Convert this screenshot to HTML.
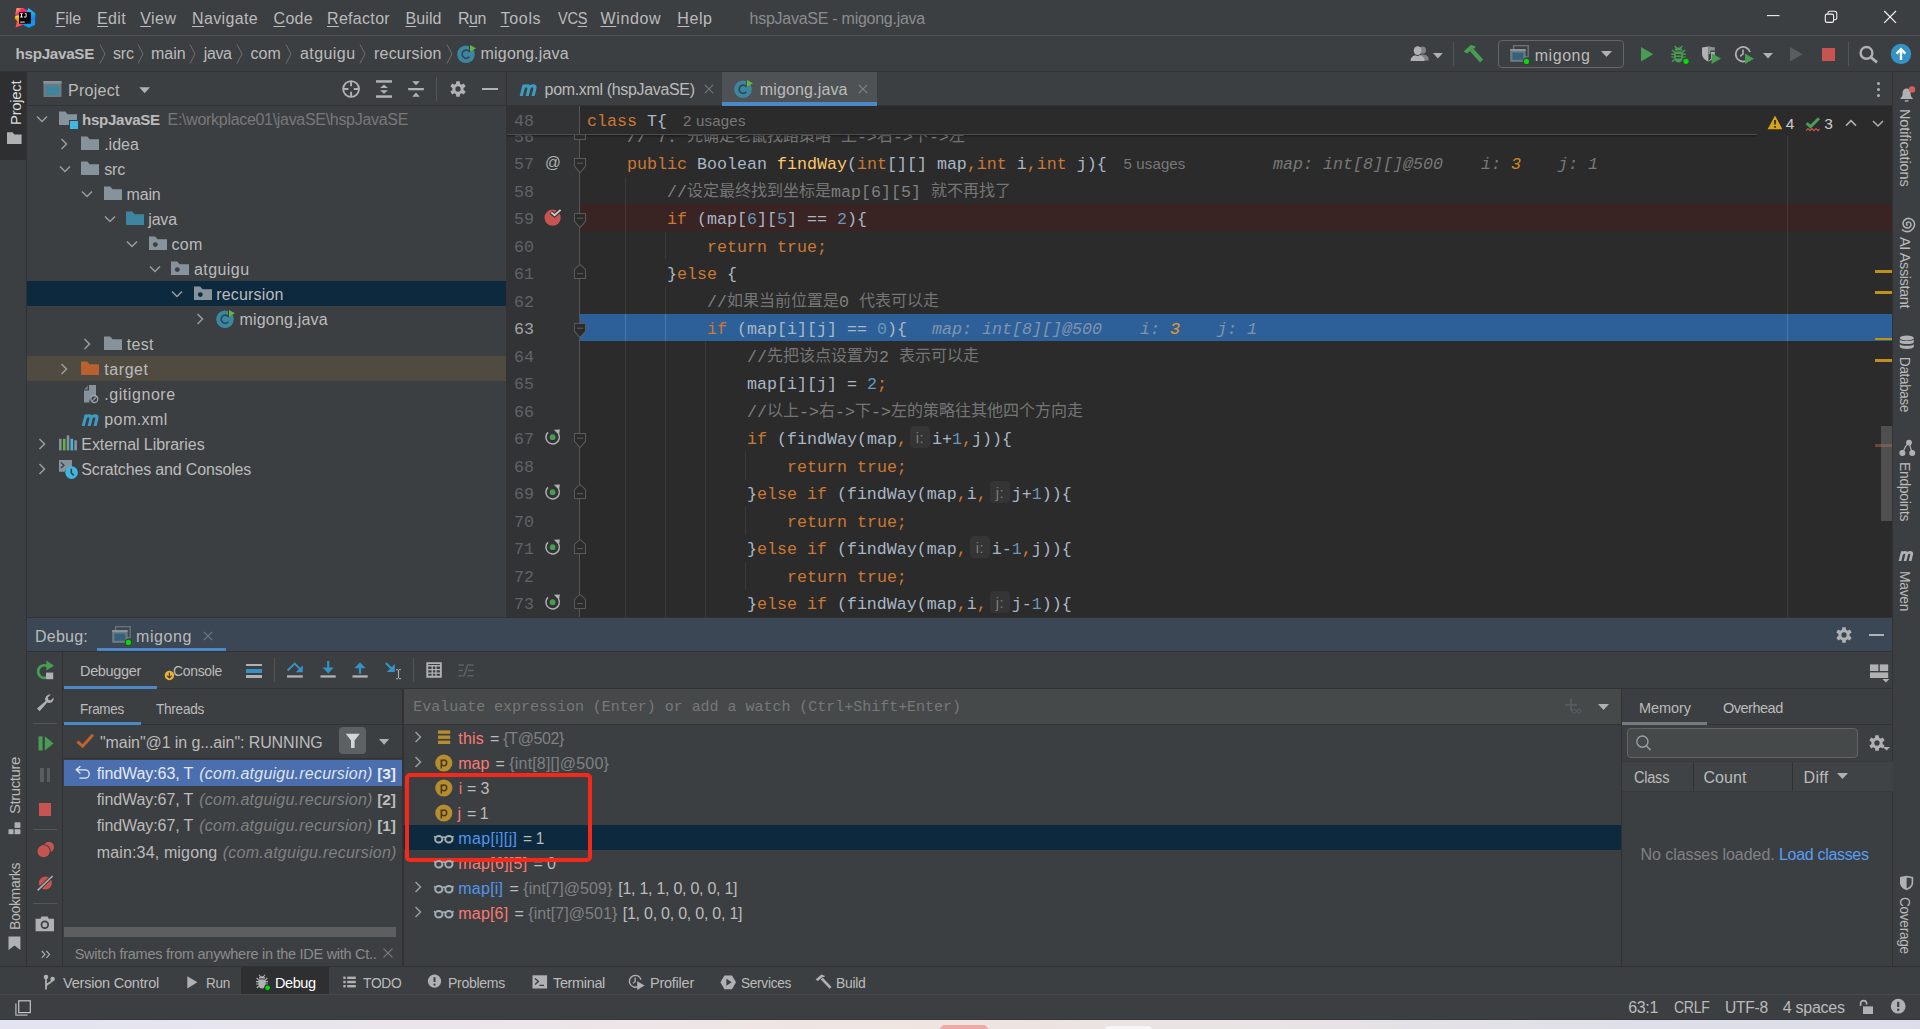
<!DOCTYPE html>
<html lang="en"><head><meta charset="utf-8"><title>hspJavaSE - migong.java</title>
<style>
html,body{margin:0;padding:0;background:#3c3f41;}
body{width:1920px;height:1029px;position:relative;overflow:hidden;font-family:"Liberation Sans","Noto Sans CJK SC",sans-serif;color:#bbbbbb;}
.a{position:absolute;box-sizing:border-box;}
.t{position:absolute;white-space:pre;font-family:"Liberation Sans","Noto Sans CJK SC",sans-serif;}
.m{font-family:"Liberation Mono","Noto Sans CJK SC",monospace;}
.ln{position:absolute;left:587px;height:27.5px;line-height:27.5px;font-family:"Liberation Mono","Noto Sans CJK SC",monospace;font-size:16.6667px;white-space:pre;color:#a9b7c6;}
.ln .c{font-size:16px;opacity:.88;position:relative;top:-0.8px}
.k{color:#cc7832} .n{color:#6897bb} .cm{color:#808080} .f{color:#ffc66d}
.h{color:#787878;font-style:italic} .ho{color:#cb8a1d;font-style:italic}
.u{text-decoration:underline;text-underline-offset:2px;}
.hb{color:#8194ae;font-style:italic} .hb .ho{color:#e39a2d}
.ph{display:inline-block;box-sizing:border-box;width:20px;height:22px;line-height:25px;overflow:hidden;margin:0 2px 0 3px;background:#353535;border-radius:4px;color:#7c7c7c;font-family:"Liberation Sans","Noto Sans CJK SC",sans-serif;font-size:14.5px;letter-spacing:.4px;text-align:center;vertical-align:middle;position:relative;top:-2.5px}
</style></head>
<body>
<div class="a" style="left:0px;top:1019px;width:1920px;height:10px;background:linear-gradient(90deg,#e3e4f1 0%,#ebe5ea 25%,#efe4e0 48%,#e8e3e4 65%,#dfdfe9 85%,#dcdde8 100%);"></div>
<div class="a" style="left:940px;top:1025px;width:48px;height:6px;background:#eeaaa4;border-radius:5px 5px 0 0;"></div>
<div class="a" style="left:1105px;top:1026px;width:47px;height:5px;background:#f6f4f6;border-radius:4px 4px 0 0;"></div>
<div class="a" style="left:0px;top:0px;width:1920px;height:35px;background:#3c3f41;"></div>
<div class="a" style="left:0px;top:35px;width:1920px;height:1px;background:#515151;"></div>
<div class="a" style="left:0px;top:36px;width:1920px;height:35px;background:#3c3f41;"></div>
<div class="a" style="left:0px;top:71px;width:1920px;height:1px;background:#323232;"></div>
<div class="a" style="left:0px;top:72px;width:26px;height:923px;background:#3c3f41;"></div>
<div class="a" style="left:26px;top:72px;width:1px;height:923px;background:#323232;"></div>
<div class="a" style="left:0px;top:72px;width:26px;height:88px;background:#2d2f30;"></div>
<div class="a" style="left:1892px;top:72px;width:1px;height:923px;background:#323232;"></div>
<div class="a" style="left:1893px;top:72px;width:27px;height:923px;background:#3c3f41;"></div>
<div class="a" style="left:27px;top:72px;width:479px;height:546px;background:#3c3f41;"></div>
<div class="a" style="left:27px;top:105px;width:479px;height:1px;background:#323232;"></div>
<div class="a" style="left:506px;top:72px;width:1px;height:546px;background:#323232;"></div>
<div class="a" style="left:507px;top:72px;width:1385px;height:34px;background:#3c3f41;"></div>
<div class="a" style="left:722px;top:72px;width:155px;height:34px;background:#4e5254;"></div>
<div class="a" style="left:722px;top:102px;width:155px;height:4px;background:#4a88c7;"></div>
<div class="a" style="left:507px;top:105px;width:215px;height:1px;background:#323232;"></div>
<div class="a" style="left:877px;top:105px;width:1015px;height:1px;background:#323232;"></div>
<div class="a" style="left:507px;top:106px;width:1385px;height:512px;background:#2b2b2b;"></div>
<div class="a" style="left:507px;top:106px;width:72px;height:512px;background:#313335;"></div>
<div class="a" style="left:579px;top:106px;width:1px;height:512px;background:#555555;"></div>
<div class="a" style="left:580px;top:204px;width:1312px;height:27px;background:#3a2323;"></div>
<div class="a" style="left:580px;top:314px;width:1312px;height:27px;background:#2d6099;"></div>
<div class="a" style="left:625px;top:177px;width:1px;height:441px;background:#3a3a3a;"></div>
<div class="a" style="left:665px;top:232px;width:1px;height:27px;background:#3a3a3a;"></div>
<div class="a" style="left:665px;top:287px;width:1px;height:331px;background:#3a3a3a;"></div>
<div class="a" style="left:705px;top:341px;width:1px;height:277px;background:#3a3a3a;"></div>
<div class="a" style="left:745px;top:452px;width:1px;height:28px;background:#3a3a3a;"></div>
<div class="a" style="left:745px;top:507px;width:1px;height:28px;background:#3a3a3a;"></div>
<div class="a" style="left:745px;top:562px;width:1px;height:28px;background:#3a3a3a;"></div>
<div class="a" style="left:625px;top:204px;width:1px;height:27px;background:#4a3535;"></div>
<div class="a" style="left:625px;top:314px;width:1px;height:27px;background:#4a78ab;"></div>
<div class="a" style="left:665px;top:314px;width:1px;height:27px;background:#4a78ab;"></div>
<div class="a" style="left:1787px;top:135px;width:1px;height:483px;background:#3d3d3d;"></div>
<div class="a" style="left:1787px;top:204px;width:1px;height:27px;background:#4a3535;"></div>
<div class="a" style="left:1787px;top:314px;width:1px;height:27px;background:#4a78ab;"></div>
<div class="ln" style="top:123.5px">    <span class="cm">// 7. <span class="c">先确定老鼠找路策略</span> <span class="c">上</span>-&gt;<span class="c">右</span>-&gt;<span class="c">下</span>-&gt;<span class="c">左</span></span></div>
<div class="ln" style="top:151.0px">    <span class="k">public</span> Boolean <span class="f">findWay</span>(<span class="k">int</span>[][] map<span class="k">,int</span> i<span class="k">,int</span> j){</div>
<div class="ln" style="top:178.5px">        <span class="cm">//<span class="c">设定最终找到坐标是</span>map[6][5] <span class="c">就不再找了</span></span></div>
<div class="ln" style="top:206.0px">        <span class="k">if</span> (map[<span class="n">6</span>][<span class="n">5</span>] == <span class="n">2</span>){</div>
<div class="ln" style="top:233.5px">            <span class="k">return true;</span></div>
<div class="ln" style="top:261.0px">        }<span class="k">else</span> {</div>
<div class="ln" style="top:288.5px">            <span class="cm">//<span class="c">如果当前位置是</span>0 <span class="c">代表可以走</span></span></div>
<div class="ln" style="top:316.0px">            <span class="k">if</span> (map[i][j] == <span class="n">0</span>){</div>
<div class="ln" style="top:343.5px">                <span class="cm">//<span class="c">先把该点设置为</span>2 <span class="c">表示可以走</span></span></div>
<div class="ln" style="top:371.0px">                map[i][j] = <span class="n">2</span><span class="k">;</span></div>
<div class="ln" style="top:398.5px">                <span class="cm">//<span class="c">以上</span>-&gt;<span class="c">右</span>-&gt;<span class="c">下</span>-&gt;<span class="c">左的策略往其他四个方向走</span></span></div>
<div class="ln" style="top:426.0px">                <span class="k">if</span> (findWay(map<span class="k">,</span><span class="ph">i:</span>i+<span class="n">1</span><span class="k">,</span>j)){</div>
<div class="ln" style="top:453.5px">                    <span class="k">return true;</span></div>
<div class="ln" style="top:481.0px">                }<span class="k">else if</span> (findWay(map<span class="k">,</span>i<span class="k">,</span><span class="ph">j:</span>j+<span class="n">1</span>)){</div>
<div class="ln" style="top:508.5px">                    <span class="k">return true;</span></div>
<div class="ln" style="top:536.0px">                }<span class="k">else if</span> (findWay(map<span class="k">,</span><span class="ph">i:</span>i-<span class="n">1</span><span class="k">,</span>j)){</div>
<div class="ln" style="top:563.5px">                    <span class="k">return true;</span></div>
<div class="ln" style="top:591.0px">                }<span class="k">else if</span> (findWay(map<span class="k">,</span>i<span class="k">,</span><span class="ph">j:</span>j-<span class="n">1</span>)){</div>
<div class="ln h" style="left:1273px;top:151.0px">map: int[8][]@500</div>
<div class="ln h" style="left:1481px;top:151.0px">i: <span class="ho">3</span></div>
<div class="ln h" style="left:1558px;top:151.0px">j: 1</div>
<div class="ln hb" style="left:932px;top:316.0px">map: int[8][]@500</div>
<div class="ln hb" style="left:1140px;top:316.0px">i: <span class="ho">3</span></div>
<div class="ln hb" style="left:1217px;top:316.0px">j: 1</div>
<span class="t" style="letter-spacing:0.139px;left:1123.5px;top:154px;font-size:15px;line-height:19px;color:#787878;">5 usages</span>
<div class="ln" style="left:514px;top:123.5px;color:#606366">56</div>
<div class="ln" style="left:514px;top:151.0px;color:#606366">57</div>
<div class="ln" style="left:514px;top:178.5px;color:#606366">58</div>
<div class="ln" style="left:514px;top:206.0px;color:#606366">59</div>
<div class="ln" style="left:514px;top:233.5px;color:#606366">60</div>
<div class="ln" style="left:514px;top:261.0px;color:#606366">61</div>
<div class="ln" style="left:514px;top:288.5px;color:#606366">62</div>
<div class="ln" style="left:514px;top:316.0px;color:#a4a3a3">63</div>
<div class="ln" style="left:514px;top:343.5px;color:#606366">64</div>
<div class="ln" style="left:514px;top:371.0px;color:#606366">65</div>
<div class="ln" style="left:514px;top:398.5px;color:#606366">66</div>
<div class="ln" style="left:514px;top:426.0px;color:#606366">67</div>
<div class="ln" style="left:514px;top:453.5px;color:#606366">68</div>
<div class="ln" style="left:514px;top:481.0px;color:#606366">69</div>
<div class="ln" style="left:514px;top:508.5px;color:#606366">70</div>
<div class="ln" style="left:514px;top:536.0px;color:#606366">71</div>
<div class="ln" style="left:514px;top:563.5px;color:#606366">72</div>
<div class="ln" style="left:514px;top:591.0px;color:#606366">73</div>
<div class="a" style="left:507px;top:106px;width:1385px;height:29px;background:#2b2b2b;"></div>
<div class="a" style="left:507px;top:106px;width:72px;height:29px;background:#313335;"></div>
<div class="a" style="left:579px;top:106px;width:1px;height:29px;background:#555555;"></div>
<div class="a" style="left:507px;top:134px;width:1250px;height:1px;background:#4d4d4d;"></div>
<div class="a" style="left:507px;top:135px;width:1250px;height:3px;background:linear-gradient(180deg,rgba(0,0,0,.35),rgba(0,0,0,0));"></div>
<div class="ln" style="top:107px;height:29px;line-height:29px"><span class="k">class</span> T{</div>
<div class="ln" style="left:514px;top:107px;height:29px;line-height:29px;color:#606366">48</div>
<span class="t" style="letter-spacing:0.214px;left:683px;top:111px;font-size:15px;line-height:19px;color:#787878;">2 usages</span>
<span class="t" style="letter-spacing:-0.074px;left:55.5px;top:9px;font-size:16px;line-height:20px;color:#bbbbbb;"><span class="u">F</span>ile</span>
<span class="t" style="letter-spacing:0.355px;left:97.0px;top:9px;font-size:16px;line-height:20px;color:#bbbbbb;"><span class="u">E</span>dit</span>
<span class="t" style="letter-spacing:0.473px;left:140.2px;top:9px;font-size:16px;line-height:20px;color:#bbbbbb;"><span class="u">V</span>iew</span>
<span class="t" style="letter-spacing:0.355px;left:192.0px;top:9px;font-size:16px;line-height:20px;color:#bbbbbb;"><span class="u">N</span>avigate</span>
<span class="t" style="letter-spacing:0.309px;left:273.5px;top:9px;font-size:16px;line-height:20px;color:#bbbbbb;"><span class="u">C</span>ode</span>
<span class="t" style="letter-spacing:0.314px;left:327.0px;top:9px;font-size:16px;line-height:20px;color:#bbbbbb;"><span class="u">R</span>efactor</span>
<span class="t" style="letter-spacing:0.084px;left:405.5px;top:9px;font-size:16px;line-height:20px;color:#bbbbbb;"><span class="u">B</span>uild</span>
<span class="t" style="letter-spacing:-0.425px;left:457.9px;top:9px;font-size:16px;line-height:20px;color:#bbbbbb;">R<span class="u">u</span>n</span>
<span class="t" style="letter-spacing:0.688px;left:500.5px;top:9px;font-size:16px;line-height:20px;color:#bbbbbb;"><span class="u">T</span>ools</span>
<span class="t" style="letter-spacing:-0.300px;left:557.9px;top:9px;font-size:16px;line-height:20px;color:#bbbbbb;transform:scaleX(0.9092);transform-origin:0 0;">VC<span class="u">S</span></span>
<span class="t" style="letter-spacing:0.630px;left:600.5px;top:9px;font-size:16px;line-height:20px;color:#bbbbbb;"><span class="u">W</span>indow</span>
<span class="t" style="letter-spacing:0.570px;left:677.3px;top:9px;font-size:16px;line-height:20px;color:#bbbbbb;"><span class="u">H</span>elp</span>
<span class="t" style="letter-spacing:-0.263px;left:749.6px;top:9px;font-size:16px;line-height:20px;color:#8b8d8e;">hspJavaSE - migong.java</span>
<svg class="a" style="left:1760px;top:0px;" width="150" height="35" viewBox="0 0 150 35"><g stroke="#f2f2f2" stroke-width="1.1" fill="none"><path d="M7 15.6H19.4"/><rect x="65.3" y="14.1" width="8.3" height="8.3" rx="1.7"/><path d="M67.9 14V13.2a1.9 1.9 0 0 1 1.9 -1.9H74.4a2.4 2.4 0 0 1 2.4 2.4V17.9a1.9 1.9 0 0 1 -1.9 1.9H73.8"/><path d="M124.2 11L136 22.8M136 11L124.2 22.8" stroke-width="1.2"/></g></svg>
<span class="t" style="letter-spacing:-0.285px;left:15.5px;top:44px;font-size:15.2px;line-height:19px;color:#bbbbbb;font-weight:bold;">hspJavaSE</span>
<span class="t" style="letter-spacing:-0.176px;left:113px;top:44px;font-size:16px;line-height:20px;color:#bbbbbb;">src</span>
<span class="t" style="letter-spacing:-0.047px;left:151px;top:44px;font-size:16px;line-height:20px;color:#bbbbbb;">main</span>
<span class="t" style="letter-spacing:-0.340px;left:203.7px;top:44px;font-size:16px;line-height:20px;color:#bbbbbb;">java</span>
<span class="t" style="letter-spacing:0.089px;left:250.5px;top:44px;font-size:16px;line-height:20px;color:#bbbbbb;">com</span>
<span class="t" style="letter-spacing:0.429px;left:300px;top:44px;font-size:16px;line-height:20px;color:#bbbbbb;">atguigu</span>
<span class="t" style="letter-spacing:0.210px;left:374px;top:44px;font-size:16px;line-height:20px;color:#bbbbbb;">recursion</span>
<span class="t" style="letter-spacing:0.174px;left:480.6px;top:44px;font-size:16px;line-height:20px;color:#bbbbbb;">migong.java</span>
<svg class="a" style="left:99px;top:43px;" width="8" height="22" viewBox="0 0 8 22"><path d="M1 1.5L6 11L1 20.5" stroke="#6e6e6e" stroke-width="1" fill="none"/></svg>
<svg class="a" style="left:137px;top:43px;" width="8" height="22" viewBox="0 0 8 22"><path d="M1 1.5L6 11L1 20.5" stroke="#6e6e6e" stroke-width="1" fill="none"/></svg>
<svg class="a" style="left:189px;top:43px;" width="8" height="22" viewBox="0 0 8 22"><path d="M1 1.5L6 11L1 20.5" stroke="#6e6e6e" stroke-width="1" fill="none"/></svg>
<svg class="a" style="left:235.5px;top:43px;" width="8" height="22" viewBox="0 0 8 22"><path d="M1 1.5L6 11L1 20.5" stroke="#6e6e6e" stroke-width="1" fill="none"/></svg>
<svg class="a" style="left:284.5px;top:43px;" width="8" height="22" viewBox="0 0 8 22"><path d="M1 1.5L6 11L1 20.5" stroke="#6e6e6e" stroke-width="1" fill="none"/></svg>
<svg class="a" style="left:359px;top:43px;" width="8" height="22" viewBox="0 0 8 22"><path d="M1 1.5L6 11L1 20.5" stroke="#6e6e6e" stroke-width="1" fill="none"/></svg>
<svg class="a" style="left:445.5px;top:43px;" width="8" height="22" viewBox="0 0 8 22"><path d="M1 1.5L6 11L1 20.5" stroke="#6e6e6e" stroke-width="1" fill="none"/></svg>
<span class="t" style="letter-spacing:0.272px;left:68px;top:81px;font-size:16px;line-height:20px;color:#bbbbbb;">Project</span>
<div class="a" style="left:27px;top:281px;width:479px;height:25px;background:#0d293e;"></div>
<div class="a" style="left:27px;top:356px;width:479px;height:25px;background:#4f4b41;"></div>
<span class="t" style="letter-spacing:-0.300px;left:81.6px;top:110px;font-size:15.5px;line-height:19px;color:#bbbbbb;font-weight:bold;transform:scaleX(0.9735);transform-origin:0 0;">hspJavaSE</span>
<span class="t" style="letter-spacing:-0.021px;left:104.2px;top:135px;font-size:16px;line-height:20px;color:#bbbbbb;">.idea</span>
<span class="t" style="letter-spacing:-0.176px;left:104.2px;top:160px;font-size:16px;line-height:20px;color:#bbbbbb;">src</span>
<span class="t" style="letter-spacing:-0.172px;left:126.5px;top:185px;font-size:16px;line-height:20px;color:#bbbbbb;">main</span>
<span class="t" style="letter-spacing:-0.190px;left:148.3px;top:210px;font-size:16px;line-height:20px;color:#bbbbbb;">java</span>
<span class="t" style="letter-spacing:0.355px;left:171.4px;top:235px;font-size:16px;line-height:20px;color:#bbbbbb;">com</span>
<span class="t" style="letter-spacing:0.429px;left:194px;top:260px;font-size:16px;line-height:20px;color:#bbbbbb;">atguigu</span>
<span class="t" style="letter-spacing:0.154px;left:216.3px;top:285px;font-size:16px;line-height:20px;color:#bbbbbb;">recursion</span>
<span class="t" style="letter-spacing:0.193px;left:239.5px;top:310px;font-size:16px;line-height:20px;color:#bbbbbb;">migong.java</span>
<span class="t" style="letter-spacing:0.251px;left:126.8px;top:335px;font-size:16px;line-height:20px;color:#bbbbbb;">test</span>
<span class="t" style="letter-spacing:0.563px;left:104.3px;top:360px;font-size:16px;line-height:20px;color:#bbbbbb;">target</span>
<span class="t" style="letter-spacing:0.557px;left:104.3px;top:385px;font-size:16px;line-height:20px;color:#bbbbbb;">.gitignore</span>
<span class="t" style="letter-spacing:0.407px;left:104.3px;top:410px;font-size:16px;line-height:20px;color:#bbbbbb;">pom.xml</span>
<span class="t" style="letter-spacing:-0.067px;left:81.3px;top:435px;font-size:16px;line-height:20px;color:#bbbbbb;">External Libraries</span>
<span class="t" style="letter-spacing:-0.161px;left:81.3px;top:460px;font-size:16px;line-height:20px;color:#bbbbbb;">Scratches and Consoles</span>
<span class="t" style="letter-spacing:-0.307px;left:167.6px;top:110px;font-size:16px;line-height:20px;color:#787878;">E:\workplace01\javaSE\hspJavaSE</span>
<svg class="a" style="left:36px;top:114.5px;" width="12" height="8" viewBox="0 0 12 8"><path d="M1 1.5L6 6.5L11 1.5" stroke="#9a9da0" stroke-width="1.5" fill="none"/></svg>
<svg class="a" style="left:60px;top:137.5px;" width="8" height="12" viewBox="0 0 8 12"><path d="M1.5 1L6.5 6L1.5 11" stroke="#9a9da0" stroke-width="1.5" fill="none"/></svg>
<svg class="a" style="left:59px;top:164.5px;" width="12" height="8" viewBox="0 0 12 8"><path d="M1 1.5L6 6.5L11 1.5" stroke="#9a9da0" stroke-width="1.5" fill="none"/></svg>
<svg class="a" style="left:81px;top:189.5px;" width="12" height="8" viewBox="0 0 12 8"><path d="M1 1.5L6 6.5L11 1.5" stroke="#9a9da0" stroke-width="1.5" fill="none"/></svg>
<svg class="a" style="left:104px;top:214.5px;" width="12" height="8" viewBox="0 0 12 8"><path d="M1 1.5L6 6.5L11 1.5" stroke="#9a9da0" stroke-width="1.5" fill="none"/></svg>
<svg class="a" style="left:126px;top:239.5px;" width="12" height="8" viewBox="0 0 12 8"><path d="M1 1.5L6 6.5L11 1.5" stroke="#9a9da0" stroke-width="1.5" fill="none"/></svg>
<svg class="a" style="left:149px;top:264.5px;" width="12" height="8" viewBox="0 0 12 8"><path d="M1 1.5L6 6.5L11 1.5" stroke="#9a9da0" stroke-width="1.5" fill="none"/></svg>
<svg class="a" style="left:171px;top:289.5px;" width="12" height="8" viewBox="0 0 12 8"><path d="M1 1.5L6 6.5L11 1.5" stroke="#9a9da0" stroke-width="1.5" fill="none"/></svg>
<svg class="a" style="left:195.5px;top:312.5px;" width="8" height="12" viewBox="0 0 8 12"><path d="M1.5 1L6.5 6L1.5 11" stroke="#9a9da0" stroke-width="1.5" fill="none"/></svg>
<svg class="a" style="left:83px;top:337.5px;" width="8" height="12" viewBox="0 0 8 12"><path d="M1.5 1L6.5 6L1.5 11" stroke="#9a9da0" stroke-width="1.5" fill="none"/></svg>
<svg class="a" style="left:60px;top:362.5px;" width="8" height="12" viewBox="0 0 8 12"><path d="M1.5 1L6.5 6L1.5 11" stroke="#9a9da0" stroke-width="1.5" fill="none"/></svg>
<svg class="a" style="left:37.5px;top:437.5px;" width="8" height="12" viewBox="0 0 8 12"><path d="M1.5 1L6.5 6L1.5 11" stroke="#9a9da0" stroke-width="1.5" fill="none"/></svg>
<svg class="a" style="left:37.5px;top:462.5px;" width="8" height="12" viewBox="0 0 8 12"><path d="M1.5 1L6.5 6L1.5 11" stroke="#9a9da0" stroke-width="1.5" fill="none"/></svg>
<svg class="a" style="left:59px;top:111.3px;" width="18" height="14" viewBox="0 0 18 14"><path d="M0 0.5H6.2L8.6 3.2H18V14H0Z" fill="#87939c"/></svg>
<div class="a" style="left:69px;top:120px;width:10px;height:10px;background:#3c3f41;"></div>
<div class="a" style="left:70.3px;top:121.3px;width:8px;height:7.8px;background:#40b6e0;"></div>
<svg class="a" style="left:81px;top:136.3px;" width="18" height="14" viewBox="0 0 18 14"><path d="M0 0.5H6.2L8.6 3.2H18V14H0Z" fill="#87939c"/></svg>
<svg class="a" style="left:81px;top:161.3px;" width="18" height="14" viewBox="0 0 18 14"><path d="M0 0.5H6.2L8.6 3.2H18V14H0Z" fill="#87939c"/></svg>
<svg class="a" style="left:104px;top:186.3px;" width="18" height="14" viewBox="0 0 18 14"><path d="M0 0.5H6.2L8.6 3.2H18V14H0Z" fill="#87939c"/></svg>
<svg class="a" style="left:126px;top:211.3px;" width="18" height="14" viewBox="0 0 18 14"><path d="M0 0.5H6.2L8.6 3.2H18V14H0Z" fill="#3e86a0"/></svg>
<svg class="a" style="left:149px;top:236.3px;" width="18" height="14" viewBox="0 0 18 14"><path d="M0 0.5H6.2L8.6 3.2H18V14H0Z" fill="#87939c"/><circle cx="6.3" cy="8.6" r="2.4" fill="#3c3f41"/></svg>
<svg class="a" style="left:171px;top:261.3px;" width="18" height="14" viewBox="0 0 18 14"><path d="M0 0.5H6.2L8.6 3.2H18V14H0Z" fill="#87939c"/><circle cx="6.3" cy="8.6" r="2.4" fill="#3c3f41"/></svg>
<svg class="a" style="left:194px;top:286.3px;" width="18" height="14" viewBox="0 0 18 14"><path d="M0 0.5H6.2L8.6 3.2H18V14H0Z" fill="#87939c"/><circle cx="6.3" cy="8.6" r="2.4" fill="#0d293e"/></svg>
<svg class="a" style="left:104px;top:336.3px;" width="18" height="14" viewBox="0 0 18 14"><path d="M0 0.5H6.2L8.6 3.2H18V14H0Z" fill="#87939c"/></svg>
<svg class="a" style="left:81px;top:361.3px;" width="18" height="14" viewBox="0 0 18 14"><path d="M0 0.5H6.2L8.6 3.2H18V14H0Z" fill="#b8602f"/></svg>
<svg class="a" style="left:215px;top:307.5px;" width="22" height="22" viewBox="0 0 22 22"><circle cx="10" cy="11.2" r="8.8" fill="#3e86a0"/><path d="M13.4 8.6A4.1 4.1 0 1 0 13.4 13.8" stroke="#2a4b5c" stroke-width="1.7" fill="none"/><path d="M13 0.5L20.5 5L13 9.5Z" fill="#3c3f41"/><path d="M14 2L20 5.3L14 9Z" fill="#62b543"/></svg>
<svg class="a" style="left:83px;top:385px;" width="16" height="19" viewBox="0 0 16 19"><path d="M6 0H13V11.5A5 5 0 0 0 6.5 17.5H1V5.6H6Z" fill="#87939c"/><path d="M4.8 0.4V4.4H0.9Z" fill="#87939c" opacity=".75"/><circle cx="11.3" cy="14" r="3.5" fill="none" stroke="#9aa5ad" stroke-width="1.3"/><path d="M8.9 16.4L13.7 11.6" stroke="#9aa5ad" stroke-width="1.3"/></svg>
<svg class="a" style="left:80.5px;top:412.6px;" width="20.0" height="13.0" viewBox="0 0 20 13"><g transform="skewX(-14)" stroke="#3e9cc0" stroke-width="3.1" fill="none"><path d="M5.5 13V1.5M5.5 6.2C5.5 1.6 11.4 1.6 11.4 6.2V13M11.4 6.2C11.4 1.6 17.3 1.6 17.3 6.2V13"/></g></svg>
<svg class="a" style="left:59px;top:435px;" width="18" height="16" viewBox="0 0 18 16"><rect x="0" y="3.8" width="2.6" height="11.6" fill="#87939c"/><rect x="3.9" y="3.8" width="2.6" height="11.6" fill="#62b543"/><rect x="7.7" y="0.4" width="2.6" height="15" fill="#87939c"/><rect x="11.5" y="3.8" width="2.6" height="11.6" fill="#40b6e0"/><rect x="15.3" y="5.3" width="2.6" height="10.1" fill="#87939c"/></svg>
<svg class="a" style="left:58px;top:459px;" width="22" height="22" viewBox="0 0 22 22"><path d="M1 1H14V9.5A7 7 0 0 0 6.6 12.8H1Z" fill="#87939c"/><path d="M3 3.5L6 6.2L3 9" stroke="#3c3f41" stroke-width="1.3" fill="none"/><circle cx="13.6" cy="13.6" r="6.3" fill="#40b6e0"/><path d="M13.3 9.8V14L15.8 16.3" stroke="#3c3f41" stroke-width="1.6" fill="none"/></svg>
<svg class="a" style="left:43px;top:80px;" width="20" height="18" viewBox="0 0 20 18"><rect x="0.5" y="1" width="18" height="16" fill="#6e7a83"/><rect x="0.5" y="1" width="18" height="2.6" fill="#87939c"/><rect x="3" y="6" width="13" height="9" fill="#3e86a0"/></svg>
<svg class="a" style="left:139px;top:87px;" width="12" height="7" viewBox="0 0 12 7"><path d="M0.3 0.3H11L5.65 6.3Z" fill="#afb1b3"/></svg>
<svg class="a" style="left:341px;top:79px;" width="20" height="20" viewBox="0 0 20 20"><circle cx="10.1" cy="10" r="7.9" stroke="#afb1b3" stroke-width="1.9" fill="none"/><path d="M10.1 2V7.3M10.1 12.7V18M2 10H7.4M12.8 10H18.2" stroke="#afb1b3" stroke-width="1.9"/></svg>
<svg class="a" style="left:376px;top:80px;" width="16" height="18" viewBox="0 0 16 18"><rect x="0" y="0.2" width="16" height="2.5" fill="#afb1b3"/><rect x="0" y="15.3" width="16" height="2.5" fill="#afb1b3"/><path d="M8 4.6L12 8H4Z M8 13.7L12 10.3H4Z" fill="#afb1b3"/></svg>
<svg class="a" style="left:408px;top:80px;" width="16" height="18" viewBox="0 0 16 18"><rect x="0.2" y="8" width="15.6" height="2.3" fill="#afb1b3"/><path d="M4.2 1.2H11.8L8 5.3Z M8 12.4L11.8 16.8H4.2Z" fill="#afb1b3"/></svg>
<div class="a" style="left:436px;top:77px;width:1px;height:24px;background:#555555;"></div>
<svg class="a" style="left:448px;top:79px;" width="20" height="20" viewBox="0 0 20 20"><path d="M7.80 4.85 L8.03 4.76 L8.25 2.19 L11.75 2.19 L11.97 4.76 L12.20 4.85 L13.36 5.52 L13.55 5.67 L15.89 4.58 L17.63 7.61 L15.53 9.09 L15.56 9.33 L15.56 10.67 L15.53 10.91 L17.63 12.39 L15.89 15.42 L13.55 14.33 L13.36 14.48 L12.20 15.15 L11.97 15.24 L11.75 17.81 L8.25 17.81 L8.03 15.24 L7.80 15.15 L6.64 14.48 L6.45 14.33 L4.11 15.42 L2.37 12.39 L4.47 10.91 L4.44 10.67 L4.44 9.33 L4.47 9.09 L2.37 7.61 L4.11 4.58 L6.45 5.67 L6.64 5.52Z M12.64 10.00 A2.64 2.64 0 1 0 7.36 10.00 A2.64 2.64 0 1 0 12.64 10.00Z" fill="#afb1b3" fill-rule="evenodd"/></svg>
<div class="a" style="left:482px;top:88px;width:16px;height:2.3px;background:#afb1b3;"></div>
<svg class="a" style="left:518.5px;top:82.8px;" width="20.0" height="13.0" viewBox="0 0 20 13"><g transform="skewX(-14)" stroke="#3e9cc0" stroke-width="3.1" fill="none"><path d="M5.5 13V1.5M5.5 6.2C5.5 1.6 11.4 1.6 11.4 6.2V13M11.4 6.2C11.4 1.6 17.3 1.6 17.3 6.2V13"/></g></svg>
<span class="t" style="letter-spacing:-0.337px;left:544.6px;top:80px;font-size:16px;line-height:20px;color:#bbbbbb;">pom.xml (hspJavaSE)</span>
<svg class="a" style="left:703.3px;top:83.2px;" width="12" height="12" viewBox="0 0 12 12"><path d="M1.7999999999999998 1.7999999999999998L10.2 10.2M10.2 1.7999999999999998L1.7999999999999998 10.2" stroke="#737577" stroke-width="1.2"/></svg>
<svg class="a" style="left:733px;top:78px;" width="22" height="22" viewBox="0 0 22 22"><circle cx="10" cy="11.2" r="8.8" fill="#3e86a0"/><path d="M13.4 8.6A4.1 4.1 0 1 0 13.4 13.8" stroke="#2a4b5c" stroke-width="1.7" fill="none"/><path d="M13 0.5L20.5 5L13 9.5Z" fill="#4e5254"/><path d="M14 2L20 5.3L14 9Z" fill="#62b543"/></svg>
<span class="t" style="letter-spacing:0.138px;left:759.8px;top:80px;font-size:16px;line-height:20px;color:#bbbbbb;">migong.java</span>
<svg class="a" style="left:857.2px;top:83.2px;" width="12" height="12" viewBox="0 0 12 12"><path d="M1.7999999999999998 1.7999999999999998L10.2 10.2M10.2 1.7999999999999998L1.7999999999999998 10.2" stroke="#7f8284" stroke-width="1.2"/></svg>
<div class="a" style="left:1876.5px;top:82px;width:3px;height:3px;background:#afb1b3;border-radius:50%;"></div>
<div class="a" style="left:1876.5px;top:88px;width:3px;height:3px;background:#afb1b3;border-radius:50%;"></div>
<div class="a" style="left:1876.5px;top:94px;width:3px;height:3px;background:#afb1b3;border-radius:50%;"></div>
<svg class="a" style="left:456px;top:42.5px;" width="22" height="22" viewBox="0 0 22 22"><circle cx="10" cy="11.2" r="8.8" fill="#3e86a0"/><path d="M13.4 8.6A4.1 4.1 0 1 0 13.4 13.8" stroke="#2a4b5c" stroke-width="1.7" fill="none"/><path d="M13 0.5L20.5 5L13 9.5Z" fill="#3c3f41"/><path d="M14 2L20 5.3L14 9Z" fill="#62b543"/></svg>
<svg class="a" style="left:1410px;top:45px;" width="20" height="17" viewBox="0 0 20 17"><g fill="#afb1b3"><circle cx="12.4" cy="5.2" r="3.6" opacity=".6"/><path d="M7 15.5C7 11 9.5 9.6 12.4 9.6S18.6 11 18.6 14V15.5Z" opacity=".6"/><ellipse cx="7.6" cy="5.6" rx="3.9" ry="4.4"/><path d="M0.6 16C0.6 11.6 3.8 10.6 5.4 10.2L7.6 11.2L9.8 10.2C11.6 10.6 14.6 11.6 14.6 16Z"/></g></svg>
<svg class="a" style="left:1433.2px;top:52.9px;" width="9.8" height="5.9" viewBox="0 0 9.8 5.9"><path d="M0 0H9.8L4.9 5.4Z" fill="#afb1b3"/></svg>
<div class="a" style="left:1453px;top:42px;width:1px;height:24px;background:#555555;"></div>
<svg class="a" style="left:1463px;top:44px;" width="21" height="20" viewBox="0 0 21 20"><g fill="#499c54"><path d="M0.6 7.4L8 0.8L13 2.8L11.4 4.6L9.8 4.5L4.2 9.6Z"/><path d="M6.8 7L10 4.3L20.2 15.6L17 18.6Z"/></g></svg>
<div class="a" style="left:1497.5px;top:40px;width:126px;height:27.5px;border:1px solid #646667;border-radius:4px;"></div>
<svg class="a" style="left:1510px;top:45px;" width="22" height="21" viewBox="0 0 22 21"><rect x="3.6" y="0.6" width="14.6" height="11" fill="none" stroke="#6e7377" stroke-width="1.4"/><rect x="0.2" y="4" width="15.4" height="12.8" fill="#6e7a83"/><rect x="0.2" y="4" width="15.4" height="2" fill="#8a949b"/><rect x="2.4" y="7.6" width="11" height="7.2" fill="#35627a"/><circle cx="16.4" cy="16.4" r="3.6" fill="#3c3f41"/><circle cx="16.4" cy="16.4" r="2.6" fill="#00e000"/></svg>
<span class="t" style="letter-spacing:0.553px;left:1534.7px;top:46px;font-size:16px;line-height:20px;color:#bbbbbb;">migong</span>
<svg class="a" style="left:1600.8px;top:51.4px;" width="11" height="6.5" viewBox="0 0 11 6.5"><path d="M0 0H11L5.5 6Z" fill="#afb1b3"/></svg>
<svg class="a" style="left:1641px;top:47px;" width="13" height="15" viewBox="0 0 13 15"><path d="M0 0L12.3 7.25L0 14.5Z" fill="#499c54"/></svg>
<svg class="a" style="left:1669px;top:45px;" width="20" height="19" viewBox="0 0 20 19"><g fill="#499c54"><path d="M5.2 1.2L6.2 0.4L8 2.6H11L12.8 0.4L13.8 1.2L12.3 3.2A4.4 4.4 0 0 1 13.6 5.6H5.4A4.4 4.4 0 0 1 6.7 3.2Z"/><path d="M5.2 6.6H13.8V8.6H16.8V10H13.8V11.4H16.8V12.8H13.8C13.8 15.6 12 17.4 9.5 17.4S5.2 15.6 5.2 12.8H2.2V11.4H5.2V10H2.2V8.6H5.2Z"/><path d="M2.4 5.4L3.4 4.4L5.8 6.6L4.8 7.6Z M16.6 5.4L15.6 4.4L13.2 6.6L14.2 7.6Z M2.6 16.2L3.6 17.2L6 14.8L5 13.8Z"/></g><rect x="6.8" y="9" width="5.4" height="1.5" fill="#3c3f41"/><rect x="6.8" y="12" width="5.4" height="1.5" fill="#3c3f41"/><circle cx="17" cy="16.3" r="3.7" fill="#3c3f41"/><circle cx="17" cy="16.3" r="2.6" fill="#00e000"/></svg>
<svg class="a" style="left:1701px;top:46px;" width="21" height="19" viewBox="0 0 21 19"><path d="M1 1.4L7.4 0.6L13.8 1.4V7.4C13.8 11.4 11 14 7.4 15.4C3.8 14 1 11.4 1 7.4Z" fill="#afb1b3"/><path d="M7.4 0.6L13.8 1.4V6H10V12.6L7.4 15.4Z" fill="#3c3f41"/><path d="M7.4 0.6L13.8 1.4V4.6H9.4V8H7.4Z" fill="#8d9092"/><path d="M10.6 7.2L20 12.6L10.6 18Z" fill="#499c54"/></svg>
<svg class="a" style="left:1734px;top:45px;" width="21" height="20" viewBox="0 0 21 20"><path d="M12.6 15.6A7.3 7.3 0 1 1 16 7" stroke="#afb1b3" stroke-width="1.7" fill="none"/><path d="M9 4.4V9L6.2 11.4" stroke="#afb1b3" stroke-width="1.6" fill="none"/><path d="M11 8.6L20 13.8L11 19Z" fill="#499c54"/></svg>
<svg class="a" style="left:1763px;top:52.9px;" width="10" height="5.9" viewBox="0 0 10 5.9"><path d="M0 0H10L5.0 5.4Z" fill="#afb1b3"/></svg>
<svg class="a" style="left:1789.5px;top:47px;" width="13" height="15" viewBox="0 0 13 15"><path d="M0 0L12.6 7.25L0 14.5Z" fill="#5a5d5f"/></svg>
<div class="a" style="left:1822px;top:48px;width:12.5px;height:12.5px;background:#c75450;"></div>
<div class="a" style="left:1848px;top:42px;width:1px;height:24px;background:#555555;"></div>
<svg class="a" style="left:1858px;top:44px;" width="22" height="21" viewBox="0 0 22 21"><circle cx="8.5" cy="8.9" r="5.9" stroke="#afb1b3" stroke-width="2.4" fill="none"/><path d="M12.8 13.2L19 18.4" stroke="#afb1b3" stroke-width="2.8"/></svg>
<svg class="a" style="left:1890px;top:43px;" width="22" height="22" viewBox="0 0 22 22"><circle cx="11" cy="11" r="10.2" fill="#3592c4"/><path d="M11 17V7M6.6 10.6L11 6.2L15.4 10.6" stroke="#fff" stroke-width="2.4" fill="none"/></svg>
<svg class="a" style="left:14px;top:7px;" width="22" height="22" viewBox="0 0 22 22"><defs><linearGradient id="lg1" x1="0" y1="0" x2="1" y2="1"><stop offset="0" stop-color="#ffd23f"/><stop offset=".5" stop-color="#ff2d84"/><stop offset="1" stop-color="#f0319b"/></linearGradient>
<linearGradient id="lg2" x1="0" y1="0" x2="0" y2="1"><stop offset="0" stop-color="#12d6f7"/><stop offset=".5" stop-color="#1686f3"/><stop offset="1" stop-color="#0aa4f5"/></linearGradient>
<linearGradient id="lg3" x1="0" y1="0" x2="1" y2="1"><stop offset="0" stop-color="#ff7a1a"/><stop offset="1" stop-color="#ff1f9c"/></linearGradient></defs>
<path d="M2.6 1L9.5 1.2L13.2 3.4L12.4 6L1 8.4Z" fill="url(#lg1)"/>
<path d="M7 1.6L12.2 2.2L13 5.8L6 6Z" fill="#f9236f"/>
<path d="M1 9L5.5 8.2L5.5 16.2L2.6 13.6L0.8 11.4Z" fill="#ff9a14"/>
<path d="M2.2 8.6L5.4 8.2V11L1.6 10.4Z" fill="#f5e21b" opacity=".8"/>
<path d="M3 14L9.2 16.4L8 18.2L1.6 20.6Z" fill="url(#lg3)"/>
<path d="M14.4 1L21.4 6.2L21 18L14.6 20.8L8.4 17.6L12 15.8H17V5.2H12.6Z" fill="url(#lg2)"/>
<rect x="5" y="5.2" width="11.8" height="11.5" fill="#0a0507"/>
<path d="M6.2 6.2H8.8V7H8V9.6H8.8V10.4H6.2V9.6H7V7H6.2Z M10.8 6.2H12.6V9.2C12.6 10.1 12 10.5 11.2 10.5C10.6 10.5 10.1 10.3 9.8 9.9L10.4 9.3C10.6 9.5 10.8 9.7 11.1 9.7C11.5 9.7 11.7 9.5 11.7 9V7H10.8Z" fill="#fff"/>
<rect x="6.2" y="14.6" width="4.6" height="0.9" fill="#fff"/></svg>
<span class="t" style="letter-spacing:-0.355px;left:5.800000000000001px;top:124.5px;transform-origin:0 0;transform:rotate(-90deg);font-size:15px;line-height:20px;color:#dcdcdc;">Project</span>
<svg class="a" style="left:7px;top:132px;" width="15" height="12" viewBox="0 0 15 12"><path d="M0 0.3H5.6L7.4 2.6H14.6V12H0Z" fill="#afb1b3"/></svg>
<span class="t" style="letter-spacing:-0.440px;left:4.6px;top:814.3px;transform-origin:0 0;transform:rotate(-90deg);font-size:15px;line-height:20px;color:#bbbbbb;">Structure</span>
<svg class="a" style="left:8px;top:822px;" width="13" height="13" viewBox="0 0 13 13"><rect x="6.6" y="0.3" width="5.8" height="5.6" fill="#afb1b3"/><rect x="0.5" y="7.2" width="5" height="5" fill="#afb1b3"/><rect x="6.6" y="7.2" width="5.8" height="5" fill="#afb1b3"/></svg>
<span class="t" style="letter-spacing:-0.300px;left:4.6px;top:929.7px;transform-origin:0 0;transform:rotate(-90deg) scaleX(0.9277);font-size:15px;line-height:20px;color:#bbbbbb;">Bookmarks</span>
<svg class="a" style="left:8px;top:936px;" width="13" height="15" viewBox="0 0 13 15"><path d="M0.5 0.4H12.4V14L6.5 9.4L0.5 14Z" fill="#afb1b3"/></svg>
<span class="t" style="letter-spacing:-0.106px;left:1914.8px;top:108.6px;transform-origin:0 0;transform:rotate(90deg);font-size:14.5px;line-height:20px;color:#bbbbbb;">Notifications</span>
<span class="t" style="letter-spacing:-0.389px;left:1914.8px;top:236.9px;transform-origin:0 0;transform:rotate(90deg);font-size:14.5px;line-height:20px;color:#bbbbbb;">AI Assistant</span>
<span class="t" style="letter-spacing:-0.300px;left:1914.8px;top:356.9px;transform-origin:0 0;transform:rotate(90deg) scaleX(0.9233);font-size:14.5px;line-height:20px;color:#bbbbbb;">Database</span>
<span class="t" style="letter-spacing:-0.300px;left:1914.8px;top:461.9px;transform-origin:0 0;transform:rotate(90deg) scaleX(0.9563);font-size:14.5px;line-height:20px;color:#bbbbbb;">Endpoints</span>
<span class="t" style="letter-spacing:-0.300px;left:1914.8px;top:570.6px;transform-origin:0 0;transform:rotate(90deg) scaleX(0.9541);font-size:14.5px;line-height:20px;color:#bbbbbb;">Maven</span>
<span class="t" style="letter-spacing:-0.300px;left:1914.8px;top:896.6px;transform-origin:0 0;transform:rotate(90deg) scaleX(0.9392);font-size:14.5px;line-height:20px;color:#bbbbbb;">Coverage</span>
<svg class="a" style="left:573px;top:157.1px;" width="14" height="17" viewBox="0 0 14 17"><path d="M1.5 1.5H12.5V9.4L7 15.6L1.5 9.4Z" fill="#2b2b2b" stroke="#5a5a5a" stroke-width="1.1"/><path d="M4 6.2H10" stroke="#5a5a5a" stroke-width="1.1"/></svg>
<svg class="a" style="left:573px;top:212.1px;" width="14" height="17" viewBox="0 0 14 17"><path d="M1.5 1.5H12.5V9.4L7 15.6L1.5 9.4Z" fill="#2b2b2b" stroke="#5a5a5a" stroke-width="1.1"/><path d="M4 6.2H10" stroke="#5a5a5a" stroke-width="1.1"/></svg>
<svg class="a" style="left:573px;top:322.1px;" width="14" height="17" viewBox="0 0 14 17"><path d="M1.5 1.5H12.5V9.4L7 15.6L1.5 9.4Z" fill="#2b2b2b" stroke="#5a5a5a" stroke-width="1.1"/><path d="M4 6.2H10" stroke="#5a5a5a" stroke-width="1.1"/></svg>
<svg class="a" style="left:573px;top:432.1px;" width="14" height="17" viewBox="0 0 14 17"><path d="M1.5 1.5H12.5V9.4L7 15.6L1.5 9.4Z" fill="#2b2b2b" stroke="#5a5a5a" stroke-width="1.1"/><path d="M4 6.2H10" stroke="#5a5a5a" stroke-width="1.1"/></svg>
<svg class="a" style="left:573px;top:262.7px;" width="14" height="17" viewBox="0 0 14 17"><path d="M7 1.4L12.5 6.4V15.5H1.5V6.4Z" fill="#2b2b2b" stroke="#5a5a5a" stroke-width="1.1"/><path d="M4 10.6H10" stroke="#5a5a5a" stroke-width="1.1"/></svg>
<svg class="a" style="left:573px;top:482.7px;" width="14" height="17" viewBox="0 0 14 17"><path d="M7 1.4L12.5 6.4V15.5H1.5V6.4Z" fill="#2b2b2b" stroke="#5a5a5a" stroke-width="1.1"/><path d="M4 10.6H10" stroke="#5a5a5a" stroke-width="1.1"/></svg>
<svg class="a" style="left:573px;top:537.7px;" width="14" height="17" viewBox="0 0 14 17"><path d="M7 1.4L12.5 6.4V15.5H1.5V6.4Z" fill="#2b2b2b" stroke="#5a5a5a" stroke-width="1.1"/><path d="M4 10.6H10" stroke="#5a5a5a" stroke-width="1.1"/></svg>
<svg class="a" style="left:573px;top:592.7px;" width="14" height="17" viewBox="0 0 14 17"><path d="M7 1.4L12.5 6.4V15.5H1.5V6.4Z" fill="#2b2b2b" stroke="#5a5a5a" stroke-width="1.1"/><path d="M4 10.6H10" stroke="#5a5a5a" stroke-width="1.1"/></svg>
<svg class="a" style="left:573px;top:135px;" width="14" height="6" viewBox="0 0 14 6"><path d="M1.5 0V4.5H12.5V0" fill="#2b2b2b" stroke="#5a5a5a" stroke-width="1.1"/></svg>
<span class="t" style="letter-spacing:-0.300px;left:544.8px;top:152px;font-size:16.5px;line-height:21px;color:#afb1b3;transform:scaleX(0.9483);transform-origin:0 0;">@</span>
<svg class="a" style="left:543px;top:207px;" width="20" height="20" viewBox="0 0 20 20"><circle cx="9.6" cy="10.7" r="8.1" fill="#c75450"/><path d="M8 5.2L11.6 8.4L18 2.6" stroke="#313335" stroke-width="4" fill="none"/><path d="M8.3 5.4L11.6 8.3L17.6 2.9" stroke="#c9cbcc" stroke-width="1.9" fill="none"/></svg>
<svg class="a" style="left:543px;top:427.2px;" width="20" height="20" viewBox="0 0 20 20"><path d="M5 5.4A6.7 6.7 0 1 0 15.6 7.2" stroke="#afb1b3" stroke-width="1.5" fill="none"/><path d="M10.9 2.8L16.9 2.4L16 7.9Z" fill="#afb1b3"/><circle cx="9.6" cy="10.2" r="2.9" fill="#499c54"/></svg>
<svg class="a" style="left:543px;top:482.2px;" width="20" height="20" viewBox="0 0 20 20"><path d="M5 5.4A6.7 6.7 0 1 0 15.6 7.2" stroke="#afb1b3" stroke-width="1.5" fill="none"/><path d="M10.9 2.8L16.9 2.4L16 7.9Z" fill="#afb1b3"/><circle cx="9.6" cy="10.2" r="2.9" fill="#499c54"/></svg>
<svg class="a" style="left:543px;top:537.2px;" width="20" height="20" viewBox="0 0 20 20"><path d="M5 5.4A6.7 6.7 0 1 0 15.6 7.2" stroke="#afb1b3" stroke-width="1.5" fill="none"/><path d="M10.9 2.8L16.9 2.4L16 7.9Z" fill="#afb1b3"/><circle cx="9.6" cy="10.2" r="2.9" fill="#499c54"/></svg>
<svg class="a" style="left:543px;top:592.2px;" width="20" height="20" viewBox="0 0 20 20"><path d="M5 5.4A6.7 6.7 0 1 0 15.6 7.2" stroke="#afb1b3" stroke-width="1.5" fill="none"/><path d="M10.9 2.8L16.9 2.4L16 7.9Z" fill="#afb1b3"/><circle cx="9.6" cy="10.2" r="2.9" fill="#499c54"/></svg>
<div class="a" style="left:1757px;top:106px;width:135px;height:30px;background:#2b2b2b;border-radius:0 0 0 4px;"></div>
<svg class="a" style="left:1767px;top:115px;" width="16" height="15" viewBox="0 0 16 15"><path d="M8 0.6L15.4 14.2H0.6Z" fill="#d6a31b"/><path d="M8 5V9.6M8 11V12.8" stroke="#2b2b2b" stroke-width="1.7"/></svg>
<span class="t" style="letter-spacing:0.975px;left:1785.8px;top:114px;font-size:15.5px;line-height:19px;color:#cdcdcd;">4</span>
<svg class="a" style="left:1804px;top:116px;" width="18" height="17" viewBox="0 0 18 17"><path d="M2.6 7.2L6.6 10.6L15 2.2" stroke="#499c54" stroke-width="3" fill="none"/><path d="M2 14.6L4 12.6L6 14.6L8 12.6L10 14.6L12 12.6L14 14.6L15.5 13" stroke="#d25252" stroke-width="1.1" fill="none"/></svg>
<span class="t" style="letter-spacing:-0.225px;left:1824.2px;top:114px;font-size:15.5px;line-height:19px;color:#cdcdcd;">3</span>
<svg class="a" style="left:1845px;top:119px;" width="12" height="8" viewBox="0 0 12 8"><path d="M1 6.6L6 1.6L11 6.6" stroke="#afb1b3" stroke-width="1.5" fill="none"/></svg>
<svg class="a" style="left:1872px;top:120px;" width="12" height="8" viewBox="0 0 12 8"><path d="M1 1L6 6L11 1" stroke="#afb1b3" stroke-width="1.5" fill="none"/></svg>
<div class="a" style="left:1875px;top:270px;width:17px;height:2.7px;background:#be9117;"></div>
<div class="a" style="left:1875px;top:291px;width:17px;height:2.7px;background:#be9117;"></div>
<div class="a" style="left:1875px;top:337.6px;width:17px;height:2.7px;background:#be9117;"></div>
<div class="a" style="left:1875px;top:359px;width:17px;height:2.7px;background:#be9117;"></div>
<div class="a" style="left:1875px;top:444px;width:17px;height:2.7px;background:#6d4636;"></div>
<div class="a" style="left:1881px;top:426px;width:10.5px;height:95px;background:rgba(128,128,128,.42);"></div>
<svg class="a" style="left:1899px;top:86px;" width="17" height="17" viewBox="0 0 17 17"><path d="M7.6 2.6C4.6 2.6 3.6 5 3.6 7.4C3.6 10 2.6 11 1.4 12.2V13H13.8V12.2C12.6 11 11.6 10 11.6 7.4C11.6 5 10.6 2.6 7.6 2.6Z" fill="#afb1b3"/><path d="M5.8 14.2H9.4V15.6H5.8Z" fill="#afb1b3"/><circle cx="13" cy="3.4" r="3.2" fill="#db5c5c"/></svg>
<svg class="a" style="left:1897.5px;top:213.5px;" width="20" height="20" viewBox="0 0 20 20"><path transform="scale(1.2) translate(-0.4,-0.3)" d="M8.6 9.6C7.4 9.6 7 8.2 8 7.4C9.4 6.4 11.4 7.4 11.2 9.4C11 11.6 8.6 12.6 6.6 11.6C4.2 10.4 4 7.2 5.8 5.4C8 3.2 11.8 3.6 13.4 6.2C15 8.8 14 12.6 11 14.2C8.6 15.4 5.6 15 3.6 13.2" stroke="#afb1b3" stroke-width="1.3" fill="none"/></svg>
<svg class="a" style="left:1899px;top:335px;" width="16" height="16" viewBox="0 0 16 16"><g fill="#afb1b3"><ellipse cx="7.8" cy="3" rx="7" ry="2.6"/><path d="M0.8 4.6C2 6.6 13.6 6.6 14.8 4.6V7.4C13.6 9.6 2 9.6 0.8 7.4Z"/><path d="M0.8 9.2C2 11.2 13.6 11.2 14.8 9.2V12C13.6 14.6 2 14.6 0.8 12Z"/></g></svg>
<svg class="a" style="left:1899px;top:439px;" width="17" height="18" viewBox="0 0 17 18"><g fill="#afb1b3"><circle cx="10" cy="3.6" r="2.9"/><circle cx="3.4" cy="14" r="3"/><circle cx="13.2" cy="14" r="3"/></g><path d="M3.4 14L6.6 7.4L10 3.6L13.2 14" stroke="#afb1b3" stroke-width="1.2" fill="none"/></svg>
<svg class="a" style="left:1898px;top:550px;" width="17.2" height="11.18" viewBox="0 0 20 13"><g transform="skewX(-14)" stroke="#afb1b3" stroke-width="3.1" fill="none"><path d="M5.5 13V1.5M5.5 6.2C5.5 1.6 11.4 1.6 11.4 6.2V13M11.4 6.2C11.4 1.6 17.3 1.6 17.3 6.2V13"/></g></svg>
<svg class="a" style="left:1899px;top:875px;" width="16" height="16" viewBox="0 0 16 16"><path d="M1 2L7.6 0.8L14.2 2V7.8C14.2 11.4 11.4 13.8 7.6 15.2C3.8 13.8 1 11.4 1 7.8Z" fill="#afb1b3"/><path d="M7.6 2.4L12.6 3.2V7.6C12.6 10.4 10.6 12.2 7.6 13.5Z" fill="#3c3f41"/></svg>
<div class="a" style="left:27px;top:617px;width:1865px;height:1px;background:#323232;"></div>
<div class="a" style="left:27px;top:618px;width:1865px;height:34px;background:#3b4754;"></div>
<div class="a" style="left:97px;top:648px;width:129px;height:4px;background:#4a88c7;"></div>
<div class="a" style="left:27px;top:652px;width:1865px;height:314px;background:#3c3f41;"></div>
<div class="a" style="left:27px;top:651px;width:1865px;height:1px;background:#323232;"></div>
<div class="a" style="left:62px;top:652px;width:1px;height:314px;background:#323232;"></div>
<div class="a" style="left:63px;top:688px;width:1830px;height:1px;background:#323232;"></div>
<div class="a" style="left:64px;top:686px;width:93px;height:3px;background:#4a88c7;"></div>
<div class="a" style="left:402px;top:689px;width:2px;height:277px;background:#323232;"></div>
<div class="a" style="left:63px;top:724px;width:339px;height:1px;background:#323232;"></div>
<div class="a" style="left:64px;top:722px;width:77px;height:3px;background:#4a88c7;"></div>
<div class="a" style="left:63px;top:758px;width:339px;height:1px;background:#323232;"></div>
<div class="a" style="left:64px;top:760px;width:338px;height:26px;background:#4b6eaf;"></div>
<div class="a" style="left:64px;top:927.4px;width:332.3px;height:9.2px;background:#5c5e60;"></div>
<div class="a" style="left:404px;top:689px;width:1217px;height:35px;background:#45494a;"></div>
<div class="a" style="left:403px;top:724px;width:1218px;height:1px;background:#323232;"></div>
<div class="a" style="left:404px;top:825px;width:1217px;height:25px;background:#0d293e;"></div>
<div class="a" style="left:1621px;top:689px;width:1px;height:277px;background:#323232;"></div>
<div class="a" style="left:1622px;top:724px;width:271px;height:1px;background:#323232;"></div>
<div class="a" style="left:1622px;top:722px;width:85px;height:3px;background:#747a80;"></div>
<div class="a" style="left:1627px;top:728px;width:231px;height:30px;background:#45494a;border:1px solid #646464;border-radius:4px;"></div>
<div class="a" style="left:1622px;top:762px;width:271px;height:29px;background:#3f4345;"></div>
<div class="a" style="left:1622px;top:761px;width:271px;height:1px;background:#383a3c;"></div>
<div class="a" style="left:1622px;top:791px;width:271px;height:1px;background:#383a3c;"></div>
<div class="a" style="left:1693px;top:762px;width:1px;height:29px;background:#2f3133;"></div>
<div class="a" style="left:1792px;top:762px;width:1px;height:29px;background:#2f3133;"></div>
<div class="a" style="left:0px;top:966px;width:1920px;height:1px;background:#323232;"></div>
<div class="a" style="left:0px;top:967px;width:1920px;height:27px;background:#3c3f41;"></div>
<div class="a" style="left:241px;top:967px;width:88px;height:27px;background:#2d2f30;"></div>
<div class="a" style="left:0px;top:994px;width:1920px;height:1px;background:#4a4846;"></div>
<div class="a" style="left:0px;top:995px;width:1920px;height:24px;background:#3c3f41;"></div>
<div class="a" style="left:0px;top:1019px;width:1920px;height:1px;background:#34373a;"></div>
<span class="t" style="letter-spacing:0.234px;left:35px;top:627px;font-size:16px;line-height:20px;color:#bbbbbb;">Debug:</span>
<span class="t" style="letter-spacing:0.586px;left:136px;top:627px;font-size:16px;line-height:20px;color:#bbbbbb;">migong</span>
<svg class="a" style="left:202px;top:630px;" width="12" height="12" viewBox="0 0 12 12"><path d="M1.7999999999999998 1.7999999999999998L10.2 10.2M10.2 1.7999999999999998L1.7999999999999998 10.2" stroke="#6f7780" stroke-width="1.2"/></svg>
<span class="t" style="letter-spacing:-0.336px;left:80px;top:662px;font-size:14.5px;line-height:18px;color:#bbbbbb;">Debugger</span>
<span class="t" style="letter-spacing:-0.300px;left:173px;top:662px;font-size:14.5px;line-height:18px;color:#bbbbbb;transform:scaleX(0.9588);transform-origin:0 0;">Console</span>
<span class="t" style="letter-spacing:-0.300px;left:80px;top:700px;font-size:14.5px;line-height:18px;color:#bbbbbb;transform:scaleX(0.9291);transform-origin:0 0;">Frames</span>
<span class="t" style="letter-spacing:-0.300px;left:156px;top:700px;font-size:14.5px;line-height:18px;color:#bbbbbb;transform:scaleX(0.9393);transform-origin:0 0;">Threads</span>
<span class="t" style="letter-spacing:-0.091px;left:100px;top:733px;font-size:16px;line-height:20px;color:#bbbbbb;">"main"@1 in g...ain": RUNNING</span>
<span class="t" style="letter-spacing:-0.094px;left:96.7px;top:764px;font-size:16px;line-height:20px;color:#e6e9ef;">findWay:63, T</span>
<span class="t" style="letter-spacing:0.231px;left:199.3px;top:764px;font-size:16px;line-height:20px;color:#dfe4ee;font-style:italic;">(com.atguigu.recursion)</span>
<span class="t" style="letter-spacing:-0.184px;left:377.3px;top:764px;font-size:15.5px;line-height:19px;color:#e6e9ef;font-weight:bold;">[3]</span>
<span class="t" style="letter-spacing:-0.094px;left:96.7px;top:790px;font-size:16px;line-height:20px;color:#bbbbbb;">findWay:67, T</span>
<span class="t" style="letter-spacing:0.231px;left:199.3px;top:790px;font-size:16px;line-height:20px;color:#7f8183;font-style:italic;">(com.atguigu.recursion)</span>
<span class="t" style="letter-spacing:-0.184px;left:377.3px;top:790px;font-size:15.5px;line-height:19px;color:#bbbbbb;font-weight:bold;">[2]</span>
<span class="t" style="letter-spacing:-0.094px;left:96.7px;top:816px;font-size:16px;line-height:20px;color:#bbbbbb;">findWay:67, T</span>
<span class="t" style="letter-spacing:0.231px;left:199.3px;top:816px;font-size:16px;line-height:20px;color:#7f8183;font-style:italic;">(com.atguigu.recursion)</span>
<span class="t" style="letter-spacing:-0.184px;left:377.3px;top:816px;font-size:15.5px;line-height:19px;color:#bbbbbb;font-weight:bold;">[1]</span>
<span class="t" style="letter-spacing:0.154px;left:96.7px;top:843px;font-size:16px;line-height:20px;color:#bbbbbb;">main:34, migong</span>
<span class="t" style="letter-spacing:0.257px;left:222.7px;top:843px;font-size:16px;line-height:20px;color:#7f8183;font-style:italic;">(com.atguigu.recursion)</span>
<span class="t" style="letter-spacing:-0.275px;left:74.7px;top:945px;font-size:14.5px;line-height:18px;color:#8c8c8c;">Switch frames from anywhere in the IDE with Ct..</span>
<svg class="a" style="left:382.2px;top:947.2px;" width="12" height="12" viewBox="0 0 12 12"><path d="M1.5999999999999996 1.5999999999999996L10.4 10.4M10.4 1.5999999999999996L1.5999999999999996 10.4" stroke="#77797b" stroke-width="1.2"/></svg>
<span class="t m" style="letter-spacing:-0.023px;left:413.3px;top:698px;font-size:15px;line-height:19px;color:#787878;">Evaluate expression (Enter) or add a watch (Ctrl+Shift+Enter)</span>
<span class="t" style="letter-spacing:0.198px;left:458.3px;top:729px;font-size:16px;line-height:20px;color:#f97a74;">this</span>
<span class="t" style="letter-spacing:-0.344px;left:490px;top:729px;font-size:16px;line-height:20px;color:#bbbbbb;">=</span>
<span class="t" style="letter-spacing:-0.387px;left:503.3px;top:729px;font-size:16px;line-height:20px;color:#7f8183;">{T@502}</span>
<span class="t" style="letter-spacing:-0.042px;left:458.3px;top:754px;font-size:16px;line-height:20px;color:#f97a74;">map</span>
<span class="t" style="letter-spacing:-0.344px;left:495.5px;top:754px;font-size:16px;line-height:20px;color:#bbbbbb;">=</span>
<span class="t" style="letter-spacing:0.178px;left:509.3px;top:754px;font-size:16px;line-height:20px;color:#7f8183;">{int[8][]@500}</span>
<span class="t" style="letter-spacing:-0.300px;left:458.8px;top:779px;font-size:16px;line-height:20px;color:#f97a74;transform:scaleX(0.8400);transform-origin:0 0;">i</span>
<span class="t" style="letter-spacing:-0.129px;left:467px;top:779px;font-size:16px;line-height:20px;color:#bbbbbb;">= 3</span>
<span class="t" style="letter-spacing:0.438px;left:457.5px;top:804px;font-size:16px;line-height:20px;color:#f97a74;">j</span>
<span class="t" style="letter-spacing:-0.462px;left:467px;top:804px;font-size:16px;line-height:20px;color:#bbbbbb;">= 1</span>
<span class="t" style="letter-spacing:0.332px;left:458.3px;top:829px;font-size:16px;line-height:20px;color:#5394ec;">map[i][j]</span>
<span class="t" style="letter-spacing:-0.300px;left:523px;top:829px;font-size:16px;line-height:20px;color:#bbbbbb;transform:scaleX(0.9639);transform-origin:0 0;">= 1</span>
<span class="t" style="letter-spacing:0.277px;left:458.3px;top:854px;font-size:16px;line-height:20px;color:#f97a74;">map[6][5]</span>
<span class="t" style="letter-spacing:-0.162px;left:533.5px;top:854px;font-size:16px;line-height:20px;color:#bbbbbb;">= 0</span>
<span class="t" style="letter-spacing:0.237px;left:458.3px;top:879px;font-size:16px;line-height:20px;color:#5394ec;">map[i]</span>
<span class="t" style="letter-spacing:-0.344px;left:509.5px;top:879px;font-size:16px;line-height:20px;color:#bbbbbb;">=</span>
<span class="t" style="letter-spacing:0.057px;left:523.3px;top:879px;font-size:16px;line-height:20px;color:#7f8183;">{int[7]@509}</span>
<span class="t" style="letter-spacing:-0.263px;left:618.3px;top:879px;font-size:16px;line-height:20px;color:#bbbbbb;">[1, 1, 1, 0, 0, 0, 1]</span>
<span class="t" style="letter-spacing:0.180px;left:458.3px;top:904px;font-size:16px;line-height:20px;color:#f97a74;">map[6]</span>
<span class="t" style="letter-spacing:-0.344px;left:514.5px;top:904px;font-size:16px;line-height:20px;color:#bbbbbb;">=</span>
<span class="t" style="letter-spacing:0.057px;left:528.3px;top:904px;font-size:16px;line-height:20px;color:#7f8183;">{int[7]@501}</span>
<span class="t" style="letter-spacing:-0.235px;left:622.7px;top:904px;font-size:16px;line-height:20px;color:#bbbbbb;">[1, 0, 0, 0, 0, 0, 1]</span>
<div class="a" style="left:405px;top:772.5px;width:187px;height:89.5px;border:4px solid #f5291b;border-radius:5px;"></div>
<span class="t" style="letter-spacing:-0.062px;left:1639px;top:699px;font-size:14.5px;line-height:18px;color:#bbbbbb;">Memory</span>
<span class="t" style="letter-spacing:-0.498px;left:1723px;top:699px;font-size:14.5px;line-height:18px;color:#bbbbbb;">Overhead</span>
<span class="t" style="letter-spacing:-0.300px;left:1633.5px;top:768px;font-size:16px;line-height:20px;color:#bbbbbb;transform:scaleX(0.9139);transform-origin:0 0;">Class</span>
<span class="t" style="letter-spacing:0.119px;left:1703.4px;top:768px;font-size:16px;line-height:20px;color:#bbbbbb;">Count</span>
<span class="t" style="letter-spacing:0.295px;left:1803.6px;top:768px;font-size:16px;line-height:20px;color:#bbbbbb;">Diff</span>
<svg class="a" style="left:1837.4px;top:773px;" width="11" height="6.5" viewBox="0 0 11 6.5"><path d="M0 0H11L5.5 6Z" fill="#afb1b3"/></svg>
<span class="t" style="letter-spacing:-0.060px;left:1640.5px;top:845px;font-size:16px;line-height:20px;color:#808284;">No classes loaded.</span>
<span class="t" style="letter-spacing:-0.316px;left:1779px;top:845px;font-size:16px;line-height:20px;color:#589df6;">Load classes</span>
<span class="t" style="letter-spacing:-0.209px;left:63px;top:974px;font-size:14.5px;line-height:18px;color:#bbbbbb;">Version Control</span>
<span class="t" style="letter-spacing:-0.300px;left:206px;top:974px;font-size:14.5px;line-height:18px;color:#bbbbbb;transform:scaleX(0.9335);transform-origin:0 0;">Run</span>
<span class="t" style="letter-spacing:-0.447px;left:275px;top:974px;font-size:14.5px;line-height:18px;color:#ffffff;">Debug</span>
<span class="t" style="letter-spacing:-0.300px;left:363px;top:974px;font-size:14.5px;line-height:18px;color:#bbbbbb;transform:scaleX(0.9524);transform-origin:0 0;">TODO</span>
<span class="t" style="letter-spacing:-0.300px;left:448px;top:974px;font-size:14.5px;line-height:18px;color:#bbbbbb;transform:scaleX(0.9686);transform-origin:0 0;">Problems</span>
<span class="t" style="letter-spacing:-0.350px;left:553px;top:974px;font-size:14.5px;line-height:18px;color:#bbbbbb;">Terminal</span>
<span class="t" style="letter-spacing:-0.242px;left:650px;top:974px;font-size:14.5px;line-height:18px;color:#bbbbbb;">Profiler</span>
<span class="t" style="letter-spacing:-0.300px;left:741px;top:974px;font-size:14.5px;line-height:18px;color:#bbbbbb;transform:scaleX(0.9397);transform-origin:0 0;">Services</span>
<span class="t" style="letter-spacing:-0.300px;left:836px;top:974px;font-size:14.5px;line-height:18px;color:#bbbbbb;transform:scaleX(0.9593);transform-origin:0 0;">Build</span>
<span class="t" style="letter-spacing:-0.385px;left:1628.3px;top:998px;font-size:16px;line-height:20px;color:#bbbbbb;">63:1</span>
<span class="t" style="letter-spacing:-0.300px;left:1674px;top:998px;font-size:16px;line-height:20px;color:#bbbbbb;transform:scaleX(0.8773);transform-origin:0 0;">CRLF</span>
<span class="t" style="letter-spacing:-0.300px;left:1725px;top:998px;font-size:16px;line-height:20px;color:#bbbbbb;transform:scaleX(0.9765);transform-origin:0 0;">UTF-8</span>
<span class="t" style="letter-spacing:-0.256px;left:1782.7px;top:998px;font-size:16px;line-height:20px;color:#bbbbbb;">4 spaces</span>
<svg class="a" style="left:112px;top:626px;" width="22" height="21" viewBox="0 0 22 21"><rect x="3.6" y="0.6" width="14.6" height="11" fill="none" stroke="#6e7377" stroke-width="1.4"/><rect x="0.2" y="4" width="15.4" height="12.8" fill="#6e7a83"/><rect x="0.2" y="4" width="15.4" height="2" fill="#8a949b"/><rect x="2.4" y="7.6" width="11" height="7.2" fill="#35627a"/><circle cx="16.4" cy="16.4" r="3.6" fill="#3c3f41"/><circle cx="16.4" cy="16.4" r="2.6" fill="#00e000"/></svg>
<svg class="a" style="left:1834px;top:625px;" width="20" height="20" viewBox="0 0 20 20"><path d="M7.80 4.85 L8.03 4.76 L8.25 2.19 L11.75 2.19 L11.97 4.76 L12.20 4.85 L13.36 5.52 L13.55 5.67 L15.89 4.58 L17.63 7.61 L15.53 9.09 L15.56 9.33 L15.56 10.67 L15.53 10.91 L17.63 12.39 L15.89 15.42 L13.55 14.33 L13.36 14.48 L12.20 15.15 L11.97 15.24 L11.75 17.81 L8.25 17.81 L8.03 15.24 L7.80 15.15 L6.64 14.48 L6.45 14.33 L4.11 15.42 L2.37 12.39 L4.47 10.91 L4.44 10.67 L4.44 9.33 L4.47 9.09 L2.37 7.61 L4.11 4.58 L6.45 5.67 L6.64 5.52Z M12.64 10.00 A2.64 2.64 0 1 0 7.36 10.00 A2.64 2.64 0 1 0 12.64 10.00Z" fill="#afb1b3" fill-rule="evenodd"/></svg>
<div class="a" style="left:1869px;top:634px;width:15px;height:2.3px;background:#afb1b3;"></div>
<svg class="a" style="left:36px;top:660px;" width="20" height="20" viewBox="0 0 20 20"><path d="M11.4 16.2A6.3 6.3 0 1 1 12.6 4.6" stroke="#499c54" stroke-width="2.6" fill="none" transform="translate(-1.2,1.4)"/><path d="M10.4 0.6L18 5.8L10.4 10.6Z" fill="#499c54"/><rect x="10" y="12.6" width="7.2" height="6.6" fill="#afb1b3"/></svg>
<svg class="a" style="left:36px;top:693px;" width="20" height="20" viewBox="0 0 20 20"><path d="M17.6 4.4A4.6 4.6 0 0 1 11.2 9.6L3.6 18.2L1 15.6L9.6 8A4.6 4.6 0 0 1 14.8 1.6L11.8 4.6L12.4 6.8L14.6 7.4Z" fill="#afb1b3"/></svg>
<div class="a" style="left:33px;top:723px;width:24px;height:1px;background:#555555;"></div>
<svg class="a" style="left:38px;top:736px;" width="16" height="15" viewBox="0 0 16 15"><rect x="0.5" y="0.3" width="4.1" height="14.2" fill="#499c54"/><path d="M6.8 0.3L15.6 7.4L6.8 14.5Z" fill="#499c54"/></svg>
<div class="a" style="left:40.3px;top:768px;width:3.6px;height:14.2px;background:#5a5d5f;"></div>
<div class="a" style="left:46.6px;top:768px;width:3.6px;height:14.2px;background:#5a5d5f;"></div>
<div class="a" style="left:38.7px;top:803px;width:12.7px;height:12.5px;background:#c75450;"></div>
<div class="a" style="left:33px;top:829px;width:24px;height:1px;background:#555555;"></div>
<svg class="a" style="left:36px;top:840px;" width="20" height="19" viewBox="0 0 20 19"><circle cx="12.8" cy="7" r="5.2" fill="#c75450"/><circle cx="7.6" cy="11.2" r="7" fill="#3c3f41"/><circle cx="7.6" cy="11.2" r="6.1" fill="#c75450"/></svg>
<svg class="a" style="left:36px;top:874px;" width="20" height="19" viewBox="0 0 20 19"><circle cx="9.4" cy="9" r="6.5" fill="#c75450"/><path d="M1.2 16.8L17 1.6" stroke="#3c3f41" stroke-width="3.6"/><path d="M1.6 16.4L16.6 2" stroke="#afb1b3" stroke-width="1.5"/></svg>
<div class="a" style="left:33px;top:903px;width:24px;height:1px;background:#555555;"></div>
<svg class="a" style="left:35px;top:916px;" width="20" height="16" viewBox="0 0 20 16"><path d="M6.6 0.6H12.6L13.8 2.8H19V15.2H0.6V2.8H5.4Z" fill="#afb1b3"/><circle cx="9.8" cy="8.8" r="4.2" fill="#3c3f41"/><circle cx="9.8" cy="8.8" r="2.5" fill="#afb1b3"/><circle cx="9.8" cy="8.8" r="2.5" fill="none"/></svg>
<svg class="a" style="left:41px;top:950px;" width="10" height="9" viewBox="0 0 10 9"><path d="M0.8 1L4 4.4L0.8 7.8M5.4 1L8.6 4.4L5.4 7.8" stroke="#afb1b3" stroke-width="1.1" fill="none"/></svg>
<div class="a" style="left:246.2px;top:664px;width:15.6px;height:2.3px;background:#afb1b3;"></div>
<div class="a" style="left:246.2px;top:668.5px;width:15.6px;height:4.1px;background:#3592c4;"></div>
<div class="a" style="left:246.2px;top:675.3px;width:15.6px;height:2.3px;background:#afb1b3;"></div>
<div class="a" style="left:274px;top:658px;width:1px;height:24px;background:#555555;"></div>
<svg class="a" style="left:286px;top:660px;" width="18" height="19" viewBox="0 0 18 19"><path d="M1.6 10.4L8.8 3.6L14.6 9.6" stroke="#3592c4" stroke-width="2" fill="none"/><path d="M16.8 5.2V12.2H9.8Z" fill="#3592c4"/><rect x="1" y="15.3" width="15.8" height="2.3" fill="#afb1b3"/></svg>
<svg class="a" style="left:320px;top:660px;" width="17" height="19" viewBox="0 0 17 19"><path d="M8.2 1V10" stroke="#3592c4" stroke-width="2.2"/><path d="M2.6 7.6H13.8L8.2 13.6Z" fill="#3592c4"/><rect x="0.5" y="15.3" width="15.2" height="2.3" fill="#afb1b3"/></svg>
<svg class="a" style="left:352px;top:660px;" width="17" height="19" viewBox="0 0 17 19"><path d="M8 13.8V6" stroke="#3592c4" stroke-width="2.2"/><path d="M2.4 8.2H13.6L8 2.2Z" fill="#3592c4"/><rect x="0.5" y="15.3" width="15.2" height="2.3" fill="#afb1b3"/></svg>
<svg class="a" style="left:384px;top:661px;" width="20" height="19" viewBox="0 0 20 19"><path d="M1.8 2L8.6 8.6" stroke="#3592c4" stroke-width="2.2"/><path d="M10.8 3V11H2.8Z" fill="#3592c4"/><path d="M12.2 8.6H13.8M15.2 8.6H16.8M12.2 17.6H13.8M15.2 17.6H16.8M14.5 9V17.2" stroke="#afb1b3" stroke-width="1.1" fill="none"/></svg>
<div class="a" style="left:413px;top:658px;width:1px;height:24px;background:#555555;"></div>
<svg class="a" style="left:426px;top:662px;" width="16" height="16" viewBox="0 0 16 16"><path d="M0.3 0.2H15.8V15.7H0.3Z M2.2 1.9V3H13.9V1.9Z M2.2 4.4V6.9H5.6V4.4Z M6.9 4.4V6.9H9.3V4.4Z M10.6 4.4V6.9H13.9V4.4Z M2.2 8.2V10.4H5.6V8.2Z M6.9 8.2V10.4H9.3V8.2Z M10.6 8.2V10.4H13.9V8.2Z M2.2 11.7V13.8H5.6V11.7Z M6.9 11.7V13.8H9.3V11.7Z M10.6 11.7V13.8H13.9V11.7Z" fill="#afb1b3" fill-rule="evenodd"/></svg>
<svg class="a" style="left:458px;top:663px;" width="16" height="15" viewBox="0 0 16 15"><path d="M0.5 2H6M0.5 7.4H5M0.5 12.8H4.6M11 2H15.6M10 7.4H15.6M9.4 12.8H15.6M5.4 13.6C8 10 7.6 5 10.6 1" stroke="#5e6163" stroke-width="1.5" fill="none"/></svg>
<svg class="a" style="left:1869px;top:664px;" width="22" height="19" viewBox="0 0 22 19"><rect x="1" y="0.4" width="8.4" height="6.6" fill="#afb1b3"/><rect x="10.8" y="0.4" width="8.4" height="6.6" fill="#afb1b3"/><rect x="1" y="8.4" width="18.2" height="5.6" fill="#afb1b3"/><path d="M13.4 15H20.4L16.9 18.4Z" fill="#afb1b3"/></svg>
<svg class="a" style="left:164px;top:670px;" width="11" height="11" viewBox="0 0 11 11"><circle cx="5.4" cy="5.5" r="4.7" fill="#f2b230"/><path d="M5.4 2.4V7.6M3 5.6L5.4 8L7.8 5.6" stroke="#3c3f41" stroke-width="1.2" fill="none"/></svg>
<svg class="a" style="left:75px;top:733px;" width="20" height="15" viewBox="0 0 20 15"><path d="M2.4 8.6L7.6 13.2L18 1.8" stroke="#c4622d" stroke-width="2.9" fill="none"/></svg>
<div class="a" style="left:339px;top:727.3px;width:27.3px;height:27.2px;background:#5c6164;border-radius:4px;"></div>
<svg class="a" style="left:345px;top:733px;" width="16" height="16" viewBox="0 0 16 16"><path d="M0.8 0.8H14.8L9.6 7.4V15H6V7.4Z" fill="#d3d5d6"/></svg>
<svg class="a" style="left:379.4px;top:738.7px;" width="10.2" height="6.3" viewBox="0 0 10.2 6.3"><path d="M0 0H10.2L5.1 5.8Z" fill="#afb1b3"/></svg>
<svg class="a" style="left:75px;top:765px;" width="16" height="15" viewBox="0 0 16 15"><path d="M5.4 1.2L1.2 4.8L5.4 8.4M1.4 4.8H10A4.2 4.2 0 0 1 10 13.2H4.4" stroke="#e6e9ef" stroke-width="1.3" fill="none"/></svg>
<svg class="a" style="left:414px;top:730.8px;" width="8" height="12" viewBox="0 0 8 12"><path d="M1.5 1L6.5 6L1.5 11" stroke="#9a9da0" stroke-width="1.5" fill="none"/></svg>
<svg class="a" style="left:414px;top:755.8px;" width="8" height="12" viewBox="0 0 8 12"><path d="M1.5 1L6.5 6L1.5 11" stroke="#9a9da0" stroke-width="1.5" fill="none"/></svg>
<svg class="a" style="left:414px;top:880.8px;" width="8" height="12" viewBox="0 0 8 12"><path d="M1.5 1L6.5 6L1.5 11" stroke="#9a9da0" stroke-width="1.5" fill="none"/></svg>
<svg class="a" style="left:414px;top:905.8px;" width="8" height="12" viewBox="0 0 8 12"><path d="M1.5 1L6.5 6L1.5 11" stroke="#9a9da0" stroke-width="1.5" fill="none"/></svg>
<svg class="a" style="left:438px;top:730px;" width="13" height="15" viewBox="0 0 13 15"><rect x="0" y="0.4" width="12.2" height="3.4" fill="#b58c2e"/><rect x="0" y="5.5" width="12.2" height="3.4" fill="#b58c2e"/><rect x="0" y="10.6" width="12.2" height="3.4" fill="#b58c2e"/></svg>
<svg class="a" style="left:434px;top:752.7px;" width="20" height="20" viewBox="0 0 20 20"><circle cx="9.8" cy="10" r="8.6" fill="#b58c2e"/><path d="M7.3 6.6V15.6M7.3 9.8C7.3 5.9 12.7 5.9 12.7 9.8S7.3 13.7 7.3 9.8" stroke="#4a3b1c" stroke-width="1.5" fill="none"/></svg>
<svg class="a" style="left:434px;top:777.7px;" width="20" height="20" viewBox="0 0 20 20"><circle cx="9.8" cy="10" r="8.6" fill="#b58c2e"/><path d="M7.3 6.6V15.6M7.3 9.8C7.3 5.9 12.7 5.9 12.7 9.8S7.3 13.7 7.3 9.8" stroke="#4a3b1c" stroke-width="1.5" fill="none"/></svg>
<svg class="a" style="left:434px;top:802.7px;" width="20" height="20" viewBox="0 0 20 20"><circle cx="9.8" cy="10" r="8.6" fill="#b58c2e"/><path d="M7.3 6.6V15.6M7.3 9.8C7.3 5.9 12.7 5.9 12.7 9.8S7.3 13.7 7.3 9.8" stroke="#4a3b1c" stroke-width="1.5" fill="none"/></svg>
<svg class="a" style="left:433px;top:832.8px;" width="22" height="12" viewBox="0 0 22 12"><ellipse cx="5.8" cy="6.2" rx="3.6" ry="3.3" stroke="#a3aeb6" stroke-width="2" fill="none"/><ellipse cx="15.9" cy="6.2" rx="3.6" ry="3.3" stroke="#a3aeb6" stroke-width="2" fill="none"/><path d="M9 4.6C10 3.9 11.7 3.9 12.7 4.6M2.4 4.2L1 3.4M19.3 4.2L20.7 3.4" stroke="#a3aeb6" stroke-width="1.6" fill="none"/></svg>
<svg class="a" style="left:433px;top:857.8px;" width="22" height="12" viewBox="0 0 22 12"><ellipse cx="5.8" cy="6.2" rx="3.6" ry="3.3" stroke="#a3aeb6" stroke-width="2" fill="none"/><ellipse cx="15.9" cy="6.2" rx="3.6" ry="3.3" stroke="#a3aeb6" stroke-width="2" fill="none"/><path d="M9 4.6C10 3.9 11.7 3.9 12.7 4.6M2.4 4.2L1 3.4M19.3 4.2L20.7 3.4" stroke="#a3aeb6" stroke-width="1.6" fill="none"/></svg>
<svg class="a" style="left:433px;top:882.8px;" width="22" height="12" viewBox="0 0 22 12"><ellipse cx="5.8" cy="6.2" rx="3.6" ry="3.3" stroke="#a3aeb6" stroke-width="2" fill="none"/><ellipse cx="15.9" cy="6.2" rx="3.6" ry="3.3" stroke="#a3aeb6" stroke-width="2" fill="none"/><path d="M9 4.6C10 3.9 11.7 3.9 12.7 4.6M2.4 4.2L1 3.4M19.3 4.2L20.7 3.4" stroke="#a3aeb6" stroke-width="1.6" fill="none"/></svg>
<svg class="a" style="left:433px;top:907.8px;" width="22" height="12" viewBox="0 0 22 12"><ellipse cx="5.8" cy="6.2" rx="3.6" ry="3.3" stroke="#a3aeb6" stroke-width="2" fill="none"/><ellipse cx="15.9" cy="6.2" rx="3.6" ry="3.3" stroke="#a3aeb6" stroke-width="2" fill="none"/><path d="M9 4.6C10 3.9 11.7 3.9 12.7 4.6M2.4 4.2L1 3.4M19.3 4.2L20.7 3.4" stroke="#a3aeb6" stroke-width="1.6" fill="none"/></svg>
<svg class="a" style="left:1564px;top:698px;" width="18" height="17" viewBox="0 0 18 17"><path d="M7 1V13M1 7H13" stroke="#5a5e60" stroke-width="1.6"/><circle cx="10.2" cy="13.2" r="2" stroke="#5a5e60" stroke-width="1" fill="none"/><circle cx="15" cy="13.2" r="2" stroke="#5a5e60" stroke-width="1" fill="none"/></svg>
<svg class="a" style="left:1597.7px;top:703.6px;" width="11" height="6.5" viewBox="0 0 11 6.5"><path d="M0 0H11L5.5 6Z" fill="#afb1b3"/></svg>
<svg class="a" style="left:1635px;top:734px;" width="18" height="18" viewBox="0 0 18 18"><circle cx="7.4" cy="7.6" r="5.6" stroke="#9da0a2" stroke-width="1.4" fill="none"/><path d="M11.4 11.8L15.6 16.2" stroke="#9da0a2" stroke-width="1.5"/></svg>
<svg class="a" style="left:1866.5px;top:732.5px;" width="20" height="20" viewBox="0 0 20 20"><path d="M7.80 4.85 L8.03 4.76 L8.25 2.19 L11.75 2.19 L11.97 4.76 L12.20 4.85 L13.36 5.52 L13.55 5.67 L15.89 4.58 L17.63 7.61 L15.53 9.09 L15.56 9.33 L15.56 10.67 L15.53 10.91 L17.63 12.39 L15.89 15.42 L13.55 14.33 L13.36 14.48 L12.20 15.15 L11.97 15.24 L11.75 17.81 L8.25 17.81 L8.03 15.24 L7.80 15.15 L6.64 14.48 L6.45 14.33 L4.11 15.42 L2.37 12.39 L4.47 10.91 L4.44 10.67 L4.44 9.33 L4.47 9.09 L2.37 7.61 L4.11 4.58 L6.45 5.67 L6.64 5.52Z M12.64 10.00 A2.64 2.64 0 1 0 7.36 10.00 A2.64 2.64 0 1 0 12.64 10.00Z" fill="#afb1b3" fill-rule="evenodd"/></svg>
<svg class="a" style="left:1883px;top:747px;" width="8" height="5" viewBox="0 0 8 5"><path d="M0 0H7L3.5 3.6Z" fill="#afb1b3"/></svg>
<svg class="a" style="left:43px;top:974px;" width="13" height="17" viewBox="0 0 13 17"><circle cx="3" cy="3" r="2.3" fill="#afb1b3"/><circle cx="9.6" cy="5" r="2.3" fill="#afb1b3"/><path d="M3 3V15.6M9.6 5C9.6 9.6 3 8.6 3 12.6" stroke="#afb1b3" stroke-width="1.8" fill="none"/></svg>
<svg class="a" style="left:187px;top:975.5px;" width="11" height="13" viewBox="0 0 11 13"><path d="M0.3 0.3L10.4 6.3L0.3 12.4Z" fill="#afb1b3"/></svg>
<svg class="a" style="left:254px;top:974px;" width="17" height="17" viewBox="0 0 17 17"><g fill="#afb1b3"><path d="M4.6 1L5.4 0.4L6.8 2.2H9.2L10.6 0.4L11.4 1L10.2 2.6A3.6 3.6 0 0 1 11.2 4.6H4.8A3.6 3.6 0 0 1 5.8 2.6Z"/><path d="M4.4 5.4H11.6V7H14V8.2H11.6V9.4H14V10.6H11.6C11.6 13 10 14.6 8 14.6S4.4 13 4.4 10.6H2V9.4H4.4V8.2H2V7H4.4Z"/><path d="M2.2 4.4L3 3.6L5 5.4L4.2 6.2Z M13.8 4.4L13 3.6L11 5.4L11.8 6.2Z M2.4 13.6L3.2 14.4L5.2 12.4L4.4 11.6Z"/></g><circle cx="13.6" cy="13.8" r="3.4" fill="#2d2f30"/><circle cx="13.6" cy="13.8" r="2.4" fill="#00e000"/></svg>
<svg class="a" style="left:343px;top:975.5px;" width="14" height="13" viewBox="0 0 14 13"><g fill="#afb1b3"><rect x="0.3" y="0.6" width="2.4" height="2.4"/><rect x="4.2" y="0.6" width="8.6" height="2.4"/><rect x="0.3" y="4.8" width="2.4" height="2.4"/><rect x="4.2" y="4.8" width="8.6" height="2.4"/><rect x="0.3" y="9" width="2.4" height="2.4"/><rect x="4.2" y="9" width="8.6" height="2.4"/></g></svg>
<svg class="a" style="left:427px;top:974px;" width="15" height="15" viewBox="0 0 15 15"><circle cx="7.5" cy="7.2" r="6.6" fill="#afb1b3"/><path d="M7.5 3.2V8" stroke="#3c3f41" stroke-width="2"/><circle cx="7.5" cy="10.6" r="1.1" fill="#3c3f41"/></svg>
<svg class="a" style="left:531.5px;top:974.5px;" width="16" height="14" viewBox="0 0 16 14"><rect x="0.5" y="0.3" width="14.6" height="13.2" fill="#afb1b3"/><path d="M3 3.4L6.4 6.4L3 9.4M7.4 10.4H12" stroke="#3c3f41" stroke-width="1.4" fill="none"/></svg>
<svg class="a" style="left:628px;top:974px;" width="18" height="17" viewBox="0 0 18 17"><path d="M10.6 12.2A5.9 5.9 0 1 1 13 5.6" stroke="#afb1b3" stroke-width="1.4" fill="none"/><path d="M7.2 3.4V7.4L5 9.2" stroke="#afb1b3" stroke-width="1.3" fill="none"/><path d="M9.2 7.2L16.6 11.6L9.2 16Z" fill="#afb1b3"/></svg>
<svg class="a" style="left:719.5px;top:974.5px;" width="17" height="15" viewBox="0 0 17 15"><path d="M4.4 0.4H12L16 7.3L12 14.2H4.4L0.4 7.3Z" fill="#afb1b3"/><path d="M6.4 3.8L11.6 7.3L6.4 10.8Z" fill="#3c3f41"/></svg>
<svg class="a" style="left:814.5px;top:974px;" width="18" height="16" viewBox="0 0 18 16"><g fill="#afb1b3"><path d="M0.6 5.6L6.4 0.6L10 2L9 3.2L7.6 3.1L3 7.1Z"/><path d="M5.8 5.4L7.8 3.7L16.6 13L14.6 14.8Z"/></g></svg>
<svg class="a" style="left:15px;top:1000px;" width="17" height="17" viewBox="0 0 17 17"><rect x="3.7" y="0.8" width="11.6" height="11.8" stroke="#c3c5c6" stroke-width="1.2" fill="none"/><path d="M0.9 3.6V15.2H12.6" stroke="#afb1b3" stroke-width="1.3" fill="none"/></svg>
<svg class="a" style="left:1858px;top:999px;" width="16" height="16" viewBox="0 0 16 16"><path d="M2.6 7V4.6A3 3 0 0 1 8.6 4.6V5.4" stroke="#afb1b3" stroke-width="1.6" fill="none"/><rect x="5" y="7.4" width="10" height="7.6" fill="#afb1b3"/></svg>
<svg class="a" style="left:1890px;top:998px;" width="16" height="16" viewBox="0 0 16 16"><circle cx="8.2" cy="8.2" r="7.4" fill="#afb1b3"/><path d="M8.2 3.8V9" stroke="#3c3f41" stroke-width="2.2"/><circle cx="8.2" cy="11.8" r="1.2" fill="#3c3f41"/></svg>
</body></html>
